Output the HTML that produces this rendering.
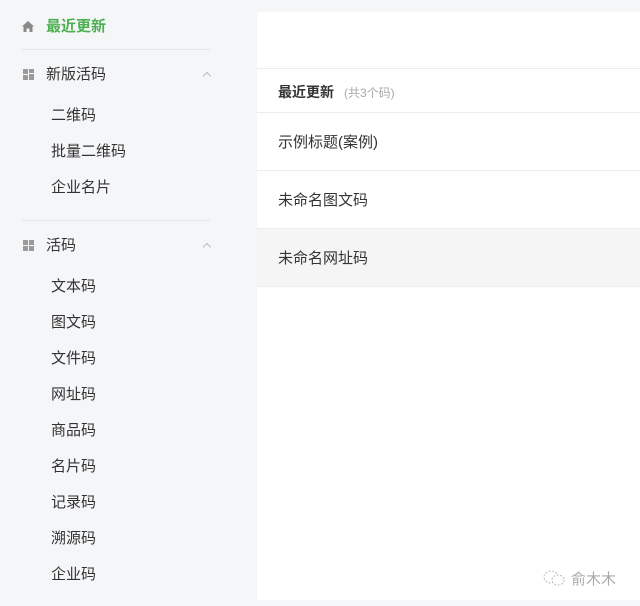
<!DOCTYPE html>
<html><head><meta charset="utf-8"><style>
*{margin:0;padding:0;box-sizing:border-box}
body{width:640px;height:606px;background:#f5f6f8;font-family:"Liberation Sans","Noto Sans CJK SC",sans-serif;position:relative;overflow:hidden;color:#333}
.a{position:absolute;white-space:nowrap}
.t{font-size:15px;line-height:20px}
.sub{left:51px}
.hr{position:absolute;left:22px;width:188px;height:1px;background:#e3e5e8}
.panel{position:absolute;left:257px;top:12px;width:383px;height:588px;background:#fff}
.row{position:absolute;left:0;width:383px;border-top:1px solid #ececec;font-size:15px;padding-left:21px}
.chev{position:absolute;left:204px;width:6px;height:6px;border-left:1.2px solid #bbb;border-top:1.2px solid #bbb;transform:rotate(45deg)}
.ic{position:absolute;left:23px;width:11px;height:11px}
.ic i{position:absolute;width:5px;height:5px;background:#9a9a9a}
</style></head><body>
<svg class="a" style="left:22px;top:21px" width="12" height="11" viewBox="0 0 12 11"><path d="M6 0 L12 5.5 L10.5 5.5 L10.5 11 L7.5 11 L7.5 7.5 L4.5 7.5 L4.5 11 L1.5 11 L1.5 5.5 L0 5.5 Z" fill="#888"/></svg>
<div class="a t" style="left:46px;top:17px;color:#4caf50;font-weight:bold">最近更新</div>
<div class="hr" style="top:49px"></div>
<div class="ic" style="top:69px"><i style="left:0;top:0"></i><i style="left:6px;top:0;height:4px"></i><i style="left:0;top:6px"></i><i style="left:6px;top:5px;height:6px"></i></div>
<div class="a t" style="left:46px;top:65px">新版活码</div>
<div class="chev" style="top:73px"></div>
<div class="a t sub" style="top:106px">二维码</div>
<div class="a t sub" style="top:142px">批量二维码</div>
<div class="a t sub" style="top:178px">企业名片</div>
<div class="hr" style="top:220px"></div>
<div class="ic" style="top:240px"><i style="left:0;top:0"></i><i style="left:6px;top:0"></i><i style="left:0;top:6px"></i><i style="left:6px;top:6px"></i></div>
<div class="a t" style="left:46px;top:236px">活码</div>
<div class="chev" style="top:244px"></div>
<div class="a t sub" style="top:277px">文本码</div>
<div class="a t sub" style="top:313px">图文码</div>
<div class="a t sub" style="top:349px">文件码</div>
<div class="a t sub" style="top:385px">网址码</div>
<div class="a t sub" style="top:421px">商品码</div>
<div class="a t sub" style="top:457px">名片码</div>
<div class="a t sub" style="top:493px">记录码</div>
<div class="a t sub" style="top:529px">溯源码</div>
<div class="a t sub" style="top:565px">企业码</div>
<div class="panel">
<div class="row" style="top:56px;height:45px;line-height:46px"><b style="font-size:14px">最近更新</b><span style="font-size:12px;color:#aaa;margin-left:10px">(共3个码)</span></div>
<div class="row" style="top:100px;height:59px;line-height:60px">示例标题(案例)</div>
<div class="row" style="top:158px;height:59px;line-height:60px">未命名图文码</div>
<div class="row" style="top:216px;height:59px;line-height:60px;background:#f5f5f5">未命名网址码</div>
<div class="row" style="top:274px;height:1px"></div>
<svg class="a" style="left:285px;top:557px" width="24" height="18" viewBox="0 0 24 18"><ellipse cx="9" cy="8" rx="7" ry="6" fill="none" stroke="#bbb" stroke-dasharray="2 1.5"/><ellipse cx="16" cy="11" rx="6" ry="5" fill="#fff" stroke="#bbb" stroke-dasharray="2 1.5"/></svg>
<div class="a" style="left:314px;top:556px;font-size:15px;color:#aaa">俞木木</div>
</div>
</body></html>
